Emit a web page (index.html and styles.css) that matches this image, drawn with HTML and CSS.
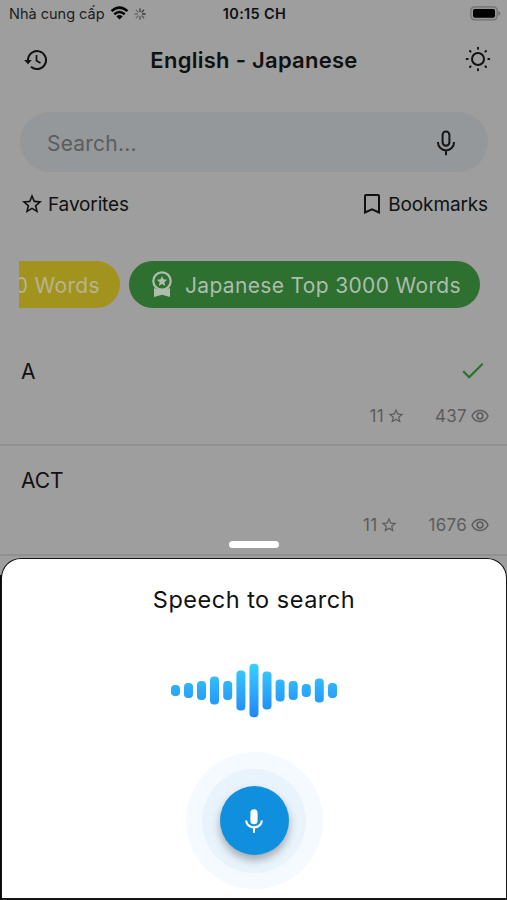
FILE: index.html
```html
<!DOCTYPE html>
<html lang="en">
<head>
<meta charset="utf-8">
<meta name="viewport" content="width=device-width, initial-scale=1">
<title>English - Japanese</title>
<link rel="stylesheet" href="styles.css">
</head>
<body>
<svg class="defs" aria-hidden="true">
  <symbol id="star" viewBox="0 0 24 24"><path fill="currentColor" d="M22 9.24l-7.19-.62L12 2 9.19 8.63 2 9.24l5.46 4.73L5.82 21 12 17.27 18.18 21l-1.63-7.03L22 9.24zM12 15.4l-3.76 2.27 1-4.28-3.32-2.88 4.38-.38L12 6.1l1.71 4.04 4.38.38-3.32 2.88 1 4.28L12 15.4z"/></symbol>
  <symbol id="eye" viewBox="0 0 18 14"><g fill="none" stroke="currentColor" stroke-width="1.5"><path d="M1 7C2.6 3.400 5.500 1.500 9 1.500S15.400 3.400 17 7C15.400 10.600 12.500 12.500 9 12.500S2.600 10.600 1 7z"/><circle cx="9" cy="7" r="2.900"/></g></symbol>
</svg>
<div class="phone">
  <div class="status">
    <div class="carrier"><span>Nhà cung cấp</span>
      <svg class="wifi" viewBox="0 0 18 14"><g fill="none" stroke="#050505" stroke-width="2.500"><path d="M1 5.100Q9-1.900 17 5.100M3.800 8.200Q9 3.700 14.200 8.200"/></g><path fill="#050505" d="M9 13.500L5.900 10.400Q9 7.800 12.100 10.400z"/></svg>
      <svg class="spinner" viewBox="0 0 12 12"><g stroke-width="1.300" stroke-linecap="round"><path stroke="#383838" d="M6 .8v2.600M9.700 2.300L7.900 4.100M11.200 6H8.600"/><path stroke="#505050" d="M9.700 9.700L7.900 7.900M6 11.200V8.600"/><path stroke="#6c6c6c" d="M2.300 9.700l1.800-1.800M.8 6h2.600M2.300 2.300l1.800 1.800"/></g></svg>
    </div>
    <div class="clock">10:15 CH</div>
    <svg class="battery" viewBox="0 0 31 15"><rect x=".8" y=".8" width="26.400" height="13" rx="3.600" fill="#969696" stroke="#707070" stroke-width="1.200"/><rect x="3" y="2.900" width="22" height="8.900" rx="1.800" fill="#000"/><path d="M28.400 5v4.800q2-.7 2-2.400t-2-2.400z" fill="#707070"/></svg>
  </div>
  <header class="header">
    <svg class="history" viewBox="0 0 24 22"><g fill="none" stroke="#111" stroke-width="2"><path d="M4 11.500V11A9 9 0 1 1 7 17.800"/><path d="M12.500 6v5.700l4 2.400" stroke-width="1.700"/></g><path fill="#111" d="M.2 11h7.600L4 15.200z"/></svg>
    <h1>English - Japanese</h1>
    <svg class="sun" viewBox="0 0 26 26"><g fill="none" stroke="#111" stroke-width="2" stroke-linecap="round"><circle cx="13" cy="13" r="6"/><path d="M13 1.700v1M13 23.300v1M1.700 13h1M23.300 13h1M5 5l.6.6M20.400 20.400l.6.6M21 5l-.6.6M5.600 20.400l-.6.6"/></g></svg>
  </header>
  <div class="search"><span>Search...</span>
    <svg viewBox="0 0 20 26"><g fill="none" stroke="#151515" stroke-width="2"><rect x="6.600" y="1.500" width="6.800" height="14.200" rx="3.400"/><path d="M2 12v.4a8 8 0 0 0 16 0V12M10 20v5.300"/></g></svg>
  </div>
  <nav class="links">
    <div class="link"><svg class="star"><use href="#star"/></svg><span class="fav">Favorites</span></div>
    <div class="link"><svg class="bookmark" viewBox="0 0 16 20"><path d="M1 1.900Q1 1 1.900 1h12.200q.9 0 .9.900V18.500l-7-3.100-7 3.100z" fill="none" stroke="#111" stroke-width="2"/></svg><span class="book">Bookmarks</span></div>
  </nav>
  <div class="chips">
    <div class="chip yellow"><span>0 Words</span></div>
    <div class="chip green"><svg viewBox="0 0 20 26"><g fill="none" stroke="currentColor" stroke-width="2.200"><circle cx="10" cy="10" r="8.700"/></g><path fill="currentColor" d="M2 17q8 4 16 0v9l-8-2.300L2 26zM10 4.900l1.500 3.400 3.700.4-2.800 2.500.8 3.700-3.200-1.900-3.200 1.900.8-3.700-2.800-2.500 3.700-.4z"/></svg><span>Japanese Top 3000 Words</span></div>
  </div>
  <ul class="words">
    <li>
      <div class="word"><span>A</span><svg class="check" viewBox="0 0 22 18"><path d="M1.200 9.300l6 6L20.700 1.700" fill="none" stroke="#2b7030" stroke-width="2.200"/></svg></div>
      <div class="stats"><span>11</span><svg class="small-star"><use href="#star"/></svg><span class="views">437</span><svg class="eye"><use href="#eye"/></svg></div>
    </li>
    <li>
      <div class="word"><span>ACT</span></div>
      <div class="stats"><span>11</span><svg class="small-star"><use href="#star"/></svg><span class="views">1676</span><svg class="eye"><use href="#eye"/></svg></div>
    </li>
  </ul>
  <div class="overlay">
    <div class="handle"></div>
    <div class="frame">
      <section class="sheet">
        <h2>Speech to search</h2>
        <svg class="wave" viewBox="0 0 168 56"><defs><linearGradient id="sound" gradientUnits="userSpaceOnUse" x1="0" y1="0" x2="0" y2="56"><stop offset="0" stop-color="#38d1ff"/><stop offset="1" stop-color="#1f83f8"/></linearGradient></defs>
          <g fill="url(#sound)"><rect x="1" y="22" width="9" height="11" rx="4"/><rect x="14" y="20" width="9" height="15" rx="4"/><rect x="27" y="18" width="9" height="19" rx="4"/><rect x="40" y="13.500" width="9" height="28" rx="4"/><rect x="53.200" y="18" width="9" height="19" rx="4"/><rect x="66.400" y="7.500" width="9" height="40" rx="4"/><rect x="79.500" y=".8" width="9" height="53.400" rx="4"/><rect x="92.500" y="8.500" width="9" height="38" rx="4"/><rect x="105.600" y="16.500" width="9" height="22" rx="4"/><rect x="118.700" y="18" width="9" height="19" rx="4"/><rect x="131.800" y="21" width="9" height="13" rx="4"/><rect x="144.800" y="15.500" width="9" height="24" rx="4"/><rect x="158" y="20" width="9" height="15" rx="4"/></g></svg>
        <div class="pulse"><div class="ring"><div class="record"><svg viewBox="0 0 18 24"><rect x="5.400" y=".3" width="7.200" height="15" rx="3.600" fill="#fff"/><path d="M1.200 11.500a7.800 6.900 0 0 0 15.600 0M9 18.400v5.300" fill="none" stroke="#fff" stroke-width="2.100"/></svg></div></div></div>
      </section>
    </div>
  </div>
</div>
</body>
</html>
```

FILE: styles.css
```css
* { box-sizing: border-box; }
body { margin: 0; background: #9e9e9e; font-family: Inter, "Liberation Sans", sans-serif; color: #111; }
svg { display: block; flex: none; }
h1, h2, ul { margin: 0; padding: 0; }
.defs { position: absolute; width: 0; height: 0; }
.phone { position: relative; width: 507px; height: 900px; overflow: hidden; background: #9e9e9e; }
.status { height: 28px; padding: 0 6px 1px 9px; display: grid; grid-template-columns: 1fr auto 1fr; align-items: center; font-size: 14.5px; white-space: nowrap; }
.carrier { display: flex; align-items: center; color: #202020; }
.wifi { width: 19px; height: 14px; margin-left: 5px; margin-bottom: 2px; }
.spinner { width: 12px; height: 12px; margin-left: 5px; }
.clock { font-weight: 600; letter-spacing: .35px; margin-right: 1px; color: #101010; }
.battery { width: 31px; height: 15px; justify-self: end; }
.header { height: 64px; padding: 0 16px 0 24px; display: flex; justify-content: space-between; align-items: center; }
.history { width: 24px; height: 22px; margin-bottom: 1px; }
.sun { width: 26px; height: 26px; margin-bottom: 2px; }
h1 { margin-right: 5px; font-size: 22px; font-weight: 600; line-height: 30px; letter-spacing: .27px; }
.search { height: 60px; margin: 20px 19px 0 20px; padding: 2px 32px 0 27px; border-radius: 30px; background: #95989a; display: flex; justify-content: space-between; align-items: center; font-size: 21px; letter-spacing: .2px; color: #5c5d5e; }
.search svg { width: 20px; height: 26px; }
.links { height: 64px; padding: 1px 19px 0 22px; display: flex; justify-content: space-between; align-items: center; font-size: 19px; letter-spacing: -.13px; }
.link { display: flex; align-items: center; }
.star { width: 24px; height: 24px; margin: 0 4px 2px -2px; }
.bookmark { width: 16px; height: 20px; margin: 0 8px 2px 0; }
.chips { height: 48px; margin: 25px 19px 0; overflow: hidden; display: flex; gap: 9px; font-size: 21px; letter-spacing: .34px; color: #adbdae; white-space: nowrap; }
.chip { height: 47px; flex: none; border-radius: 24px; display: flex; align-items: center; padding: 1px 19px 0 23px; }
.yellow { width: 101px; padding: 1px 20px 0 0; justify-content: flex-end; border-radius: 0 24px 24px 0; background: #a2931f; color: #b8b391; }
.green { background: #2d7030; width: 351px; }
.green svg { width: 20px; height: 26px; margin: 0 13px 2px 0; }
.words { list-style: none; margin-top: 27px; }
.words li { height: 110px; padding: 0 18px 0 21px; border-bottom: 2px solid #909090; }
.words li + li { margin-top: -1px; height: 111px; }
.word { height: 70px; display: flex; align-items: center; justify-content: space-between; font-size: 21px; }
.check { width: 22px; height: 18px; margin-right: 5px; }
.stats { display: flex; align-items: center; justify-content: flex-end; height: 20px; font-size: 17px; letter-spacing: .3px; color: #5c5c5c; }
.small-star { width: 18px; height: 18px; margin-left: 3px; }
.views { margin-left: 30px; }
.eye { width: 18px; height: 14px; margin-left: 4px; }
.overlay { position: absolute; left: 0; right: 0; bottom: 0; height: 359px; }
.handle { width: 50px; height: 7px; margin: 0 auto 10px; background: #fff; border-radius: 4px; }
.frame { height: 342px; background: linear-gradient(#9e9e9e 17px, #080808 17px) left / 2px 100% no-repeat; }
.sheet { height: 342px; border: 1px solid #161616; border-width: 1px 1px 2px 1px; border-radius: 20px 20px 0 0; margin: 0 0 0 1px; background: #fff; display: flex; flex-direction: column; align-items: center; }
h2 { margin-top: 26px; font-size: 23.5px; line-height: 30px; font-weight: 400; letter-spacing: .5px; }
.wave { width: 168px; height: 56px; margin-top: 48px; }
.pulse { width: 137px; height: 137px; margin-top: 33px; border-radius: 50%; background: #f4faff; display: grid; place-items: center; }
.ring { width: 104px; height: 104px; border-radius: 50%; background: #e8f3fc; display: grid; place-items: center; }
.record { width: 69px; height: 69px; border-radius: 50%; background: #118fdf; display: grid; place-items: center; box-shadow: 0 5px 8px rgba(0, 0, 0, .3); }
.record svg { width: 18px; height: 24px; }
```
